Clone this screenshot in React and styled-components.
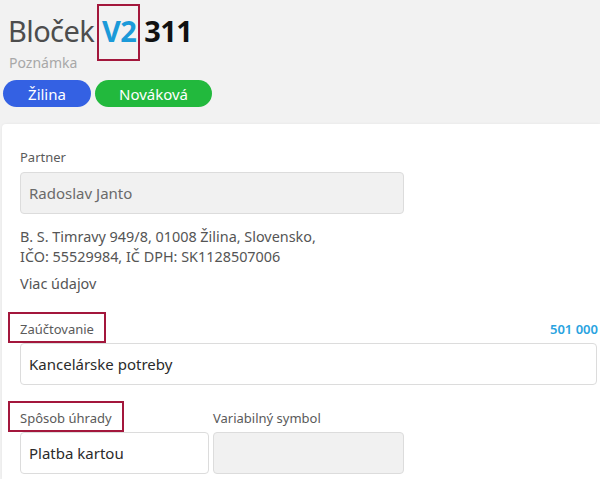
import React from 'react';
import styled, {createGlobalStyle, css} from 'styled-components';

const GlobalStyle = createGlobalStyle`
    html, body {
        margin: 0;
        padding: 0;
        background: #f2f2f2;
        font-family: "Noto Sans", "Open Sans", sans-serif;
        overflow: hidden;
    }
`;

const Page = styled('div')`
    width: 600px;
    height: 479px;
    display: flex;
    flex-direction: column;
`;

const Header = styled('div')`
    padding: 11px 0 0 8px;
    display: flex;
    flex-direction: column;
`;

const Marked = css`
    position: relative;
    &::after {
        content: '';
        position: absolute;
        border: 2px solid #a3173c;
        pointer-events: none;
    }
`;

const Title = styled('h1')`
    margin: 0;
    font-size: 29px;
    line-height: 40px;
    font-weight: 400;
    letter-spacing: -0.6px;
    color: #4d4d4d;
    display: flex;
    gap: 8px;
`;

const Version = styled('span')`
    font-weight: 700;
    color: #1b9ad9;
    ${Marked}
    &::after {
        top: -7px;
        bottom: -10px;
        left: -5px;
        right: -4px;
    }
`;

const Number = styled('span')`
    font-weight: 700;
    color: #111;
`;

const Note = styled('div')`
    font-size: 14px;
    color: #a8a8a8;
    margin: 2px 0 0 1px;
    line-height: 20px;
`;

const Tags = styled('div')`
    display: flex;
    gap: 4px;
    margin: 7px 0 0 -5px;
`;

const Tag = styled('span')`
    height: 27px;
    border-radius: 14px;
    color: #fff;
    font-size: 15px;
    display: flex;
    align-items: center;
    justify-content: center;
    width: ${({w}) => w}px;
    background: ${({color}) => color};
`;

const Card = styled('div')`
    margin: 17px 0 0 2px;
    flex: 1;
    background: #fff;
    border-radius: 4px 0 0 0;
    box-shadow: 0 0 3px rgba(0, 0, 0, 0.06);
    padding: 24px 3px 0 18px;
    display: flex;
    flex-direction: column;
`;

const Label = styled('div')`
    font-size: 13px;
    color: #5a5a5a;
    line-height: 18px;
    display: flex;
    justify-content: space-between;
    align-items: center;
    ${({marked}) => marked && css`
        & > span:first-child {
            ${Marked}
            &::after {
                top: -8px;
                bottom: -5px;
                left: -12px;
                right: -12px;
            }
        }
    `}
`;

const Account = styled('span')`
    color: #2aa3df;
    font-weight: 600;
    margin-right: -1px;
`;

const Input = styled('div')`
    box-sizing: border-box;
    height: 42px;
    border: 1px solid #dcdcdc;
    border-radius: 4px;
    display: flex;
    align-items: center;
    padding: 0 8px;
    font-size: 15px;
    color: ${({disabled}) => disabled ? '#6a6a6a' : '#2b2b2b'};
    background: ${({disabled}) => disabled ? '#f1f1f1' : '#fff'};
    width: ${({w}) => w ? `${w}px` : 'auto'};
`;

const Field = styled('div')`
    display: flex;
    flex-direction: column;
    gap: ${({gap}) => gap || 6}px;
    margin-top: ${({top}) => top || 0}px;
`;

const Address = styled('div')`
    font-size: 14.4px;
    color: #555;
    line-height: 20px;
    margin-top: 13px;
`;

const More = styled('div')`
    font-size: 14.4px;
    color: #555;
    margin-top: 7px;
    line-height: 20px;
`;

const Row = styled('div')`
    display: flex;
    gap: 4px;
    margin-top: 24px;
`;

export default function App() {
    return (
        <Page>
            <GlobalStyle/>
            <Header>
                <Title>
                    <span>Bloček</span>
                    <Version>V2</Version>
                    <Number>311</Number>
                </Title>
                <Note>Poznámka</Note>
                <Tags>
                    <Tag w={88} color="#3461e3">Žilina</Tag>
                    <Tag w={117} color="#22b93d">Nováková</Tag>
                </Tags>
            </Header>
            <Card>
                <Field>
                    <Label><span>Partner</span></Label>
                    <Input disabled w={384}>Radoslav Janto</Input>
                </Field>
                <Address>
                    B. S. Timravy 949/8, 01008 Žilina, Slovensko,<br/>
                    IČO: 55529984, IČ DPH: SK1128507006
                </Address>
                <More>Viac údajov</More>
                <Field top={26} gap={5}>
                    <Label marked><span>Zaúčtovanie</span><Account>501 000</Account></Label>
                    <Input>Kancelárske potreby</Input>
                </Field>
                <Row>
                    <Field gap={5}>
                        <Label marked><span>Spôsob úhrady</span></Label>
                        <Input w={189}>Platba kartou</Input>
                    </Field>
                    <Field gap={5}>
                        <Label><span>Variabilný symbol</span></Label>
                        <Input disabled w={191}/>
                    </Field>
                </Row>
            </Card>
        </Page>
    );
}
